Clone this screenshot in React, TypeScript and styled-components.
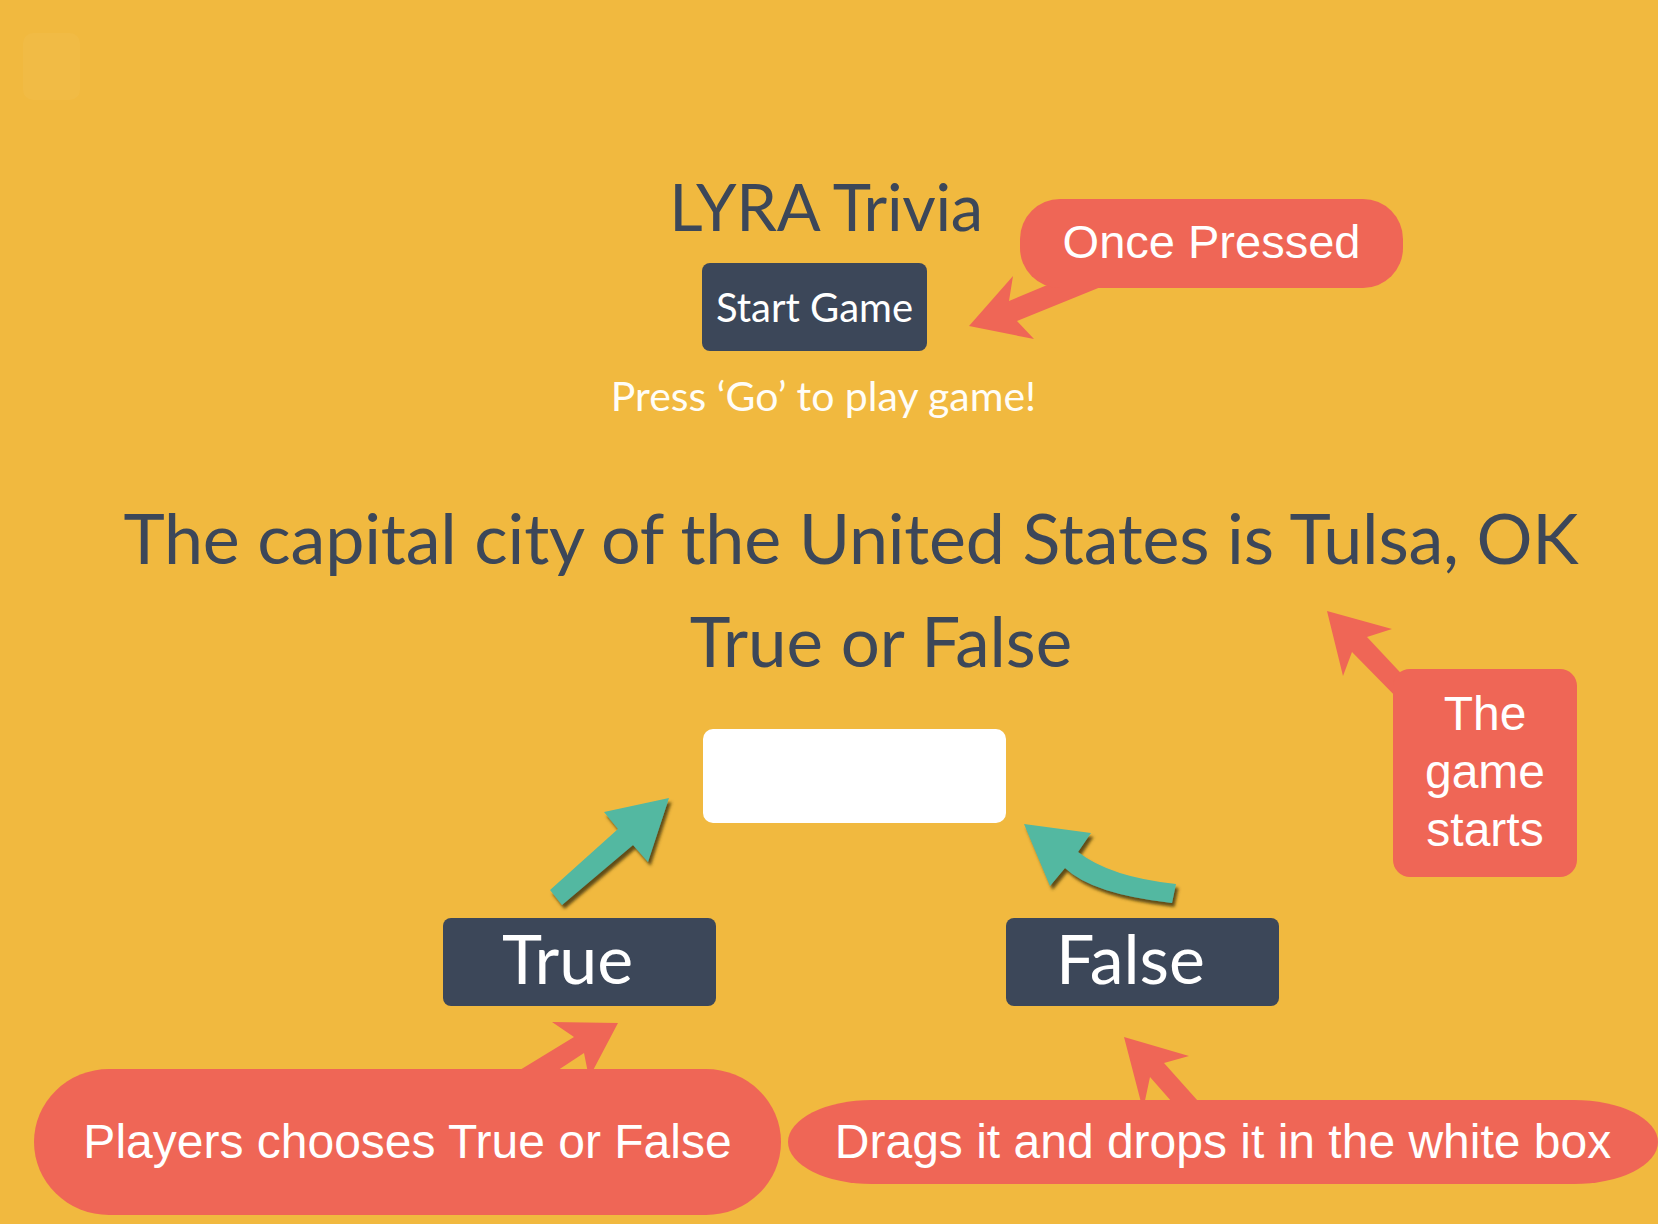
import React from "react";
import styled, { createGlobalStyle } from "styled-components";

const BG = "#F1B93F";
const NAVY = "#3C4759";
const RED = "#EF6656";
const TEAL = "#53B8A1";

const GlobalStyle = createGlobalStyle`
  html, body {
    margin: 0;
    padding: 0;
    background: ${BG};
  }
  body {
    font-family: "Lato", "Open Sans", sans-serif;
  }
`;

const Page = styled.div`
  position: relative;
  width: 1658px;
  height: 1224px;
  overflow: hidden;
  background: ${BG};
  display: flex;
  flex-direction: column;
`;

const TopBar = styled.div`
  padding: 33px 0 0 23px;
  display: flex;
`;

const GhostTile = styled.div`
  width: 57px;
  height: 67px;
  border-radius: 10px;
  background: rgba(255, 255, 255, 0.03);
`;

const Column = styled.div<{ $gap?: number }>`
  display: flex;
  flex-direction: column;
  align-items: center;
  margin-top: ${(p) => p.$gap ?? 0}px;
`;

const Title = styled.h1`
  margin: 0 6px 0 0;
  font-family: "Lato", "Open Sans", sans-serif;
  font-weight: 400;
  font-size: 65px;
  line-height: 80px;
  letter-spacing: -0.3px;
  color: ${NAVY};
`;

const StartButton = styled.button`
  margin: 17px 29px 0 0;
  width: 225px;
  height: 88px;
  padding: 0;
  border: none;
  border-radius: 8px;
  background: ${NAVY};
  color: #ffffff;
  font-family: "Lato", "Open Sans", sans-serif;
  font-size: 40px;
  line-height: 88px;
  cursor: pointer;
`;

const Hint = styled.p`
  margin: 21px 11px 0 0;
  font-family: "Lato", "Open Sans", sans-serif;
  font-size: 41px;
  line-height: 48px;
  color: #fffdf7;
`;

const Question = styled.h2`
  margin: 75px 0 0 44px;
  font-family: "Lato", "Open Sans", sans-serif;
  font-weight: 400;
  font-size: 70px;
  line-height: 84px;
  letter-spacing: -0.2px;
  white-space: nowrap;
  color: ${NAVY};
`;

const Prompt = styled.h3`
  margin: 21px 0 0 104px;
  font-family: "Lato", "Open Sans", sans-serif;
  font-weight: 400;
  font-size: 69px;
  line-height: 82px;
  color: ${NAVY};
`;

const DropZone = styled.div`
  margin: 47px 0 0 51px;
  width: 303px;
  height: 94px;
  border-radius: 10px;
  background: #ffffff;
`;

const ChoiceRow = styled.div`
  margin-top: 95px;
  padding-left: 443px;
  display: flex;
  gap: 290px;
`;

const ChoiceButton = styled.button`
  width: 273px;
  height: 88px;
  padding: 0 24px 8px 0;
  border: none;
  border-radius: 8px;
  background: ${NAVY};
  color: #ffffff;
  font-family: "Lato", "Open Sans", sans-serif;
  font-size: 68px;
  line-height: 80px;
  cursor: grab;
`;

const NoteRow = styled.div`
  margin-top: 63px;
  padding-left: 34px;
  display: flex;
  align-items: center;
  gap: 7px;
`;

const Bubble = styled.div<{ $w: number; $h: number; $radius: string }>`
  position: relative;
  z-index: 2;
  flex: none;
  box-sizing: border-box;
  width: ${(p) => p.$w}px;
  height: ${(p) => p.$h}px;
  border-radius: ${(p) => p.$radius};
  background: ${RED};
  color: #ffffff;
  display: flex;
  align-items: center;
  justify-content: center;
  text-align: center;
  font-family: "Liberation Sans", Arial, sans-serif;
  font-size: 48px;
  line-height: 58px;
  white-space: nowrap;
`;

const FloatingNote = styled(Bubble)<{ $x: number; $y: number }>`
  position: absolute;
  left: ${(p) => p.$x}px;
  top: ${(p) => p.$y}px;
`;

const OncePressed = styled(FloatingNote)`
  font-size: 47px;
  padding-bottom: 3px;
`;

const GameStarts = styled(FloatingNote)`
  white-space: normal;
  padding: 0 10px 3px;
`;

const ArrowLayer = styled.svg`
  position: absolute;
  left: 0;
  top: 0;
  z-index: 1;
  pointer-events: none;
`;

function Arrows() {
  return (
    <ArrowLayer width={1658} height={1224} viewBox="0 0 1658 1224">
      <defs>
        <filter id="tealShadow" x="-20%" y="-20%" width="140%" height="140%">
          <feDropShadow dx="2.5" dy="4" stdDeviation="1.5" floodColor="#4a3a08" floodOpacity="0.85" />
        </filter>
      </defs>
      {/* Once Pressed -> Start Game */}
      <polygon
        fill={RED}
        points="969,326 1013,276 1009,301 1052,283 1118,280 1017,321 1034,339"
      />
      {/* The game starts -> question */}
      <polygon
        fill={RED}
        points="1327,611 1392,629 1367,637 1412,685 1405,706 1352,652 1343,676"
      />
      {/* Players chooses -> True */}
      <polygon
        fill={RED}
        points="618,1023 552,1022 574,1037 500,1082 540,1082 584,1053 589,1078"
      />
      {/* Drags it -> False */}
      <polygon
        fill={RED}
        points="1124,1037 1189,1056 1164,1063 1206,1110 1179,1110 1150,1077 1143,1110"
      />
      {/* True -> drop zone */}
      <polygon
        fill={TEAL}
        filter="url(#tealShadow)"
        points="550,890 618,829 604,812 669,798 648,862 633,845 562,905"
      />
      {/* False -> drop zone */}
      <path
        fill={TEAL}
        filter="url(#tealShadow)"
        d="M1024 824 L1091 833 L1078 852 Q1110 877 1176 884 L1172 903 Q1092 894 1065 868 L1050 886 Z"
      />
    </ArrowLayer>
  );
}

export default function App() {
  return (
    <>
      <GlobalStyle />
      <Page>
        <TopBar>
          <GhostTile />
        </TopBar>

        <Column $gap={66}>
          <Title>LYRA Trivia</Title>
          <StartButton type="button">Start Game</StartButton>
          <Hint>Press ‘Go’ to play game!</Hint>
          <Question>The capital city of the United States is Tulsa, OK</Question>
          <Prompt>True or False</Prompt>
          <DropZone />
        </Column>

        <ChoiceRow>
          <ChoiceButton type="button">True</ChoiceButton>
          <ChoiceButton type="button">False</ChoiceButton>
        </ChoiceRow>

        <NoteRow>
          <Bubble $w={747} $h={146} $radius="75px / 73px">
            Players chooses True or False
          </Bubble>
          <Bubble $w={870} $h={84} $radius="84px / 42px">
            Drags it and drops it in the white box
          </Bubble>
        </NoteRow>

        <Arrows />

        <OncePressed $x={1020} $y={199} $w={383} $h={89} $radius="40px">
          Once Pressed
        </OncePressed>
        <GameStarts $x={1393} $y={669} $w={184} $h={208} $radius="17px">
          The game starts
        </GameStarts>
      </Page>
    </>
  );
}
